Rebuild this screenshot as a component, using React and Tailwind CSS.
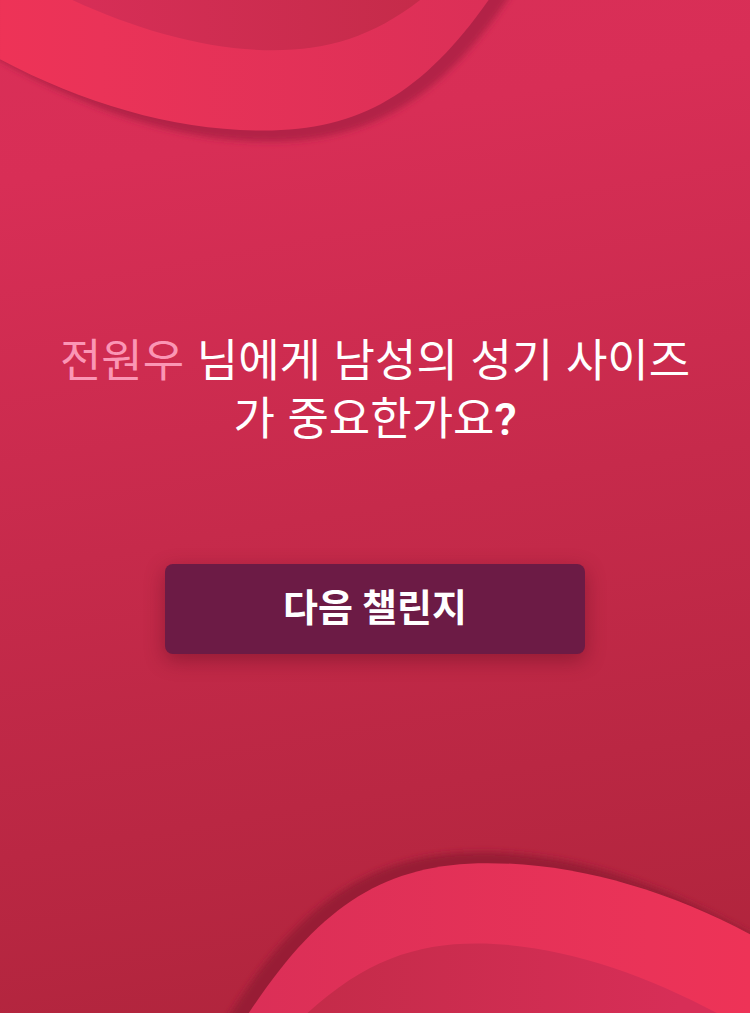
import { useId } from 'react';

const OUTER = 'C85 124 175 150 262 150 C365 150 430 107 500 0';
const INNER = 'M32 0 C110 42 195 70 272 70 C335 70 385 52 442 0 Z';

function Wave({ viewBox, shadow, className }) {
  const id = useId();

  return (
    <svg viewBox={viewBox} className={className} aria-hidden="true">
      <defs>
        <linearGradient id={`${id}-band`} gradientUnits="userSpaceOnUse" x1="0" y1="0" x2="500" y2="0">
          <stop offset="0" stopColor="#ee3357" />
          <stop offset="0.2" stopColor="#ea3358" />
          <stop offset="1" stopColor="#db2f57" />
        </linearGradient>
        <linearGradient id={`${id}-inner`} gradientUnits="userSpaceOnUse" x1="70" y1="0" x2="440" y2="0">
          <stop offset="0" stopColor="#d72e57" />
          <stop offset="1" stopColor="#c42b49" />
        </linearGradient>
        <filter id={`${id}-blur`} x="-10%" y="-20%" width="120%" height="140%">
          <feGaussianBlur stdDeviation="3" />
        </filter>
      </defs>
      <path
        d="M-20 -30 V69 L0 80 C85 128 175 161 268 161 C375 161 448 112 518 0 L537 -30 Z"
        fill={shadow}
        filter={`url(#${id}-blur)`}
      />
      <path d={`M0 0 V79 ${OUTER} Z`} fill={`url(#${id}-band)`} />
      <path d={INNER} fill={`url(#${id}-inner)`} />
    </svg>
  );
}

export default function App() {
  const [player, question] = ['전원우', '님에게 남성의 성기 사이즈가 중요한가요'];

  return (
    <main className="relative flex min-h-screen flex-col items-center overflow-hidden bg-[linear-gradient(170deg,#da2f58_0%,#d82e56_16%,#c62a4b_50%,#ae243b_100%)] px-12 pt-[332px] pb-80 font-['Inter','Noto_Sans_CJK_KR',sans-serif] text-white">
      {/* Corner waves */}
      <Wave viewBox="0 20 560 160" shadow="#b22446" className="absolute top-0 left-0 w-3/4" />
      <Wave viewBox="0 1 560 180" shadow="#981e35" className="absolute right-0 bottom-0 w-3/4 rotate-180 overflow-visible" />

      <h1 className="relative text-center text-[45px] leading-[58px] font-normal">
        <span className="text-[#fb96b5]">{player}</span> {question}
        <span className="font-['Roboto',sans-serif] font-semibold">?</span>
      </h1>

      <button
        type="button"
        className="relative mt-[115px] h-[90px] w-full max-w-[420px] rounded-lg bg-[#6c1b45] pb-1 text-[38px] font-bold shadow-[0_6px_20px_rgba(90,10,30,0.45)]"
      >
        다음 챌린지
      </button>
    </main>
  );
}
